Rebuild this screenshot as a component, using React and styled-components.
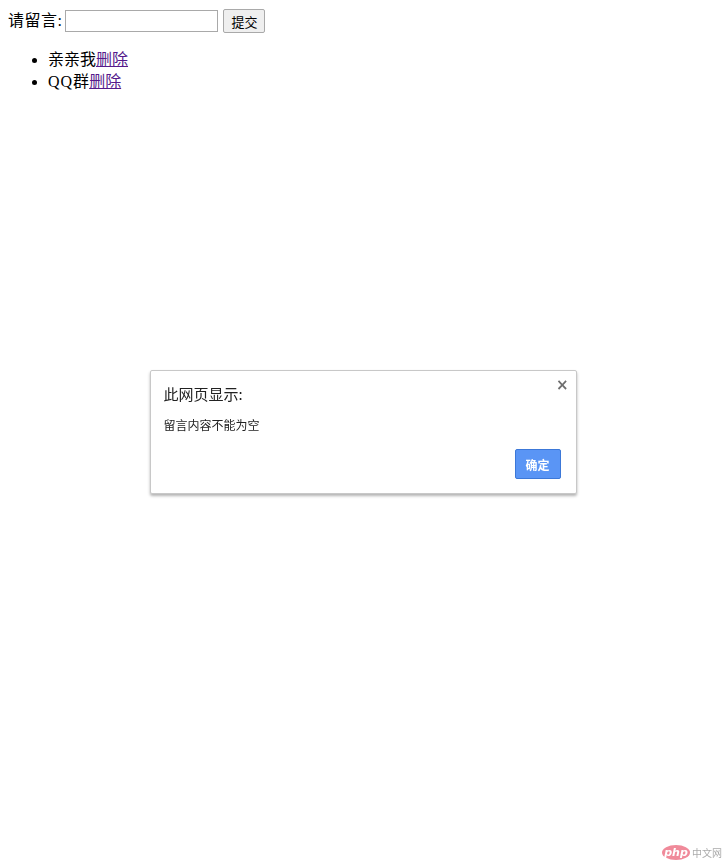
import React from "react";
import styled, { createGlobalStyle } from "styled-components";

const Global = createGlobalStyle`
  html, body { margin: 0; padding: 0; background: #fff; }
  body {
    margin: 8px;
    font-family: "Liberation Serif", "Noto Sans CJK SC", serif;
    font-size: 16px;
    color: #000;
  }
`;

const FormRow = styled.div`
  display: flex;
  align-items: center;
  height: 26px;
`;

const Label = styled.span`
  line-height: 20px;
  letter-spacing: 0.5px;
`;

const TextInput = styled.input`
  box-sizing: border-box;
  width: 153px;
  height: 22px;
  margin: 0 5px 0 3px;
  border: 1px solid #a9a9a9;
  padding: 1px 2px;
  font-size: 13px;
`;

const Btn = styled.button`
  box-sizing: border-box;
  height: 24px;
  width: 42px;
  padding: 0;
  border: 1px solid #a9a9a9;
  border-radius: 2px;
  background: #efefef;
  font-family: "Noto Sans CJK SC", sans-serif;
  font-size: 13px;
  color: #000;
`;

const List = styled.ul`
  margin: 15px 0 0;
  padding-left: 40px;
  line-height: 22px;
`;

const Item = styled.li``;

const Latin = styled.span`
  letter-spacing: 1px;
`;

const DelLink = styled.a`
  color: #551a8b;
  text-decoration: underline;
`;

const Overlay = styled.div`
  position: fixed;
  inset: 0;
  display: flex;
  align-items: center;
  justify-content: center;
`;

const Dialog = styled.div`
  position: relative;
  box-sizing: border-box;
  width: 427px;
  height: 124px;
  margin-left: -1px;
  background: #fff;
  border: 1px solid #c8c8c8;
  border-radius: 2px;
  box-shadow: 0 2px 3px rgba(0, 0, 0, 0.3);
  padding: 12px 15px 0 13px;
  display: flex;
  flex-direction: column;
  font-family: "Noto Sans CJK SC", sans-serif;
`;

const Title = styled.div`
  font-size: 15px;
  line-height: 22px;
  color: #222;
`;

const Message = styled.div`
  margin-top: 12px;
  font-size: 12px;
  line-height: 16px;
  color: #222;
`;

const Close = styled.div`
  position: absolute;
  right: 7px;
  top: 5px;
  font-family: "DejaVu Sans", sans-serif;
  font-size: 15px;
  font-weight: bold;
  color: #6e6e6e;
`;

const Footer = styled.div`
  display: flex;
  justify-content: flex-end;
  margin-top: 16px;
`;

const OkBtn = styled.button`
  box-sizing: border-box;
  width: 46px;
  height: 30px;
  padding: 0;
  border: 1px solid #3c78d8;
  border-radius: 2px;
  background: #5a95f5;
  color: #fff;
  font-family: "Noto Sans CJK SC", sans-serif;
  font-weight: bold;
  font-size: 12px;
`;

const Watermark = styled.div`
  position: fixed;
  right: 5px;
  bottom: 4px;
  display: flex;
  align-items: center;
  gap: 2px;
  font-family: "Noto Sans CJK SC", sans-serif;
  font-size: 10px;
  color: #aaa;
`;

function PhpLogo() {
  return (
    <svg width="28" height="15" viewBox="0 0 28 15">
      <ellipse cx="14" cy="7.5" rx="14" ry="7.5" fill="#f08a9a" />
      <text x="14" y="11" textAnchor="middle" fill="#fff" fontSize="11" fontStyle="italic" fontFamily="DejaVu Sans, sans-serif" fontWeight="bold">php</text>
    </svg>
  );
}

export default function App() {
  return (
    <>
      <Global />
      <FormRow>
        <Label>请留言:</Label>
        <TextInput type="text" />
        <Btn>提交</Btn>
      </FormRow>
      <List>
        <Item>亲亲我<DelLink href="#">删除</DelLink></Item>
        <Item><Latin>QQ</Latin>群<DelLink href="#">删除</DelLink></Item>
      </List>
      <Overlay>
        <Dialog>
          <Close>×</Close>
          <Title>此网页显示:</Title>
          <Message>留言内容不能为空</Message>
          <Footer>
            <OkBtn>确定</OkBtn>
          </Footer>
        </Dialog>
      </Overlay>
      <Watermark>
        <PhpLogo />
        <span>中文网</span>
      </Watermark>
    </>
  );
}
